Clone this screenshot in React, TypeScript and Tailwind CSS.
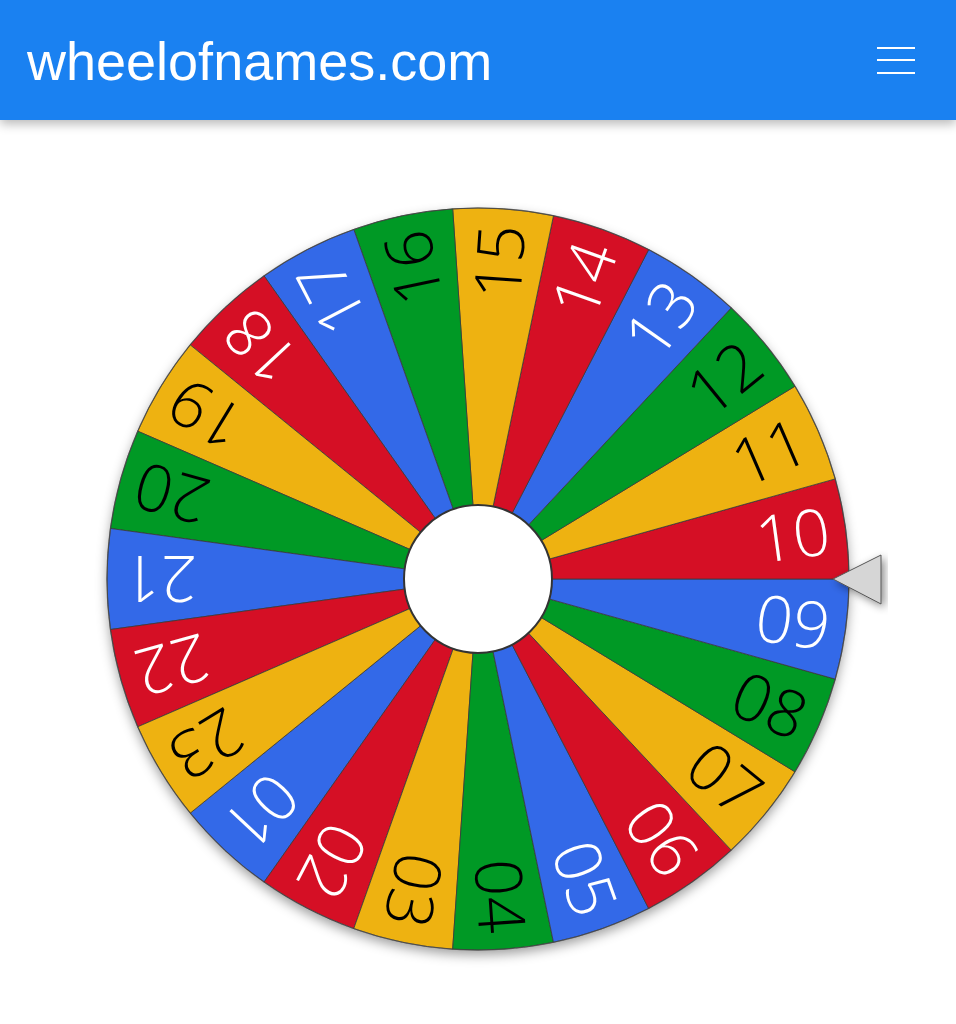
import React from "react";

const COLORS = ["#3369e8", "#d50f25", "#eeb211", "#009925"];
const TEXT = ["#ffffff", "#ffffff", "#000000", "#000000"];

function Wheel() {
  const size = 820;
  const cx = 410;
  const cy = 410;
  const R = 371;
  const N = 23;
  const step = 360 / N;
  const fs = 65;
  const rad = (d: number) => (d * Math.PI) / 180;
  const items = Array.from({ length: N }, (_, i) => i + 1);
  return (
    <svg width={size} height={size} viewBox={`0 0 ${size} ${size}`} className="block">
      <defs>
        <filter id="wshadow" x="-10%" y="-10%" width="120%" height="120%">
          <feDropShadow dx="0" dy="5" stdDeviation="6" floodColor="#000" floodOpacity="0.38" />
        </filter>
        <filter id="pshadow" x="-50%" y="-50%" width="200%" height="200%">
          <feDropShadow dx="3" dy="3" stdDeviation="4" floodColor="#000" floodOpacity="0.45" />
        </filter>
      </defs>
      <circle cx={cx} cy={cy} r={R} fill="#fff" filter="url(#wshadow)" />
      {items.map((n) => {
        const c = (9 - n) * step + step / 2;
        const a1 = rad(c - step / 2);
        const a2 = rad(c + step / 2);
        const d = `M ${cx} ${cy} L ${cx + R * Math.cos(a1)} ${cy + R * Math.sin(a1)} A ${R} ${R} 0 0 1 ${cx + R * Math.cos(a2)} ${cy + R * Math.sin(a2)} Z`;
        return (
          <path key={`s${n}`} d={d} fill={COLORS[(n - 1) % 4]} stroke="#3a3a3a" strokeOpacity="0.8" strokeWidth="1" />
        );
      })}
      {items.map((n) => {
        const c = (9 - n) * step + step / 2;
        return (
          <g key={`t${n}`} transform={`rotate(${c} ${cx} ${cy})`}>
            <text
              x={cx + 355}
              y={cy + fs * 0.355}
              textAnchor="end"
              fontSize={fs}
              fontWeight={300}
              fontFamily="'Open Sans', 'Lato', sans-serif"
              fill={TEXT[(n - 1) % 4]}
            >
              {String(n).padStart(2, "0")}
            </text>
          </g>
        );
      })}
      <circle cx={cx} cy={cy} r={R} fill="none" stroke="#444" strokeOpacity="0.7" strokeWidth="1.2" />
      <circle cx={cx} cy={cy} r={74} fill="#fff" stroke="#333" strokeWidth="2" />
      <polygon
        points={`${cx + 355},${cy} ${cx + 403},${cy - 24} ${cx + 403},${cy + 25}`}
        fill="#d6d6d6"
        stroke="#555"
        strokeWidth="1"
        filter="url(#pshadow)"
      />
    </svg>
  );
}

export default function App() {
  return (
    <div className="min-h-screen bg-white">
      <header className="relative z-10 flex h-[120px] items-center justify-between bg-[#1a81f1] pl-[27px] pr-[41px] shadow-[0_4px_10px_rgba(0,0,0,0.28)]">
        <span
          className="pt-[2px] text-[54px] leading-none text-white"
          style={{ fontFamily: "'Liberation Sans', Arial, sans-serif" }}
        >
          wheelofnames.com
        </span>
        <div className="flex w-[38px] flex-col gap-[10.5px]">
          <div className="h-[2px] bg-white" />
          <div className="h-[2px] bg-white" />
          <div className="h-[2px] bg-white" />
        </div>
      </header>
      <main className="flex justify-center pt-[49px]">
        <Wheel />
      </main>
    </div>
  );
}
